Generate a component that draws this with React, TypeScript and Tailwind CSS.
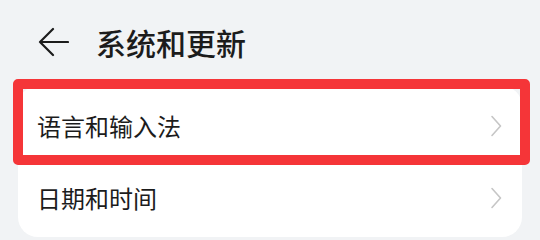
import React from 'react';

const rows = ['语言和输入法', '日期和时间'];

function Chevron() {
  return (
    <svg width="12" height="22" viewBox="0 0 12 22" fill="none">
      <path d="M2 1.5 L10.5 11 L2 20.5" stroke="#c6c6c6" strokeWidth="1.6" strokeLinecap="round" strokeLinejoin="round" />
    </svg>
  );
}

export default function App() {
  return (
    <div
      className="relative w-[540px] h-[240px] overflow-hidden bg-[#f1f3f5]"
      style={{ fontFamily: '"Noto Sans CJK SC", "Noto Sans", sans-serif' }}
    >
      {/* Header */}
      <div className="flex items-center h-[84px] pl-[38px]">
        <svg width="31" height="30" viewBox="0 0 31 30" fill="none">
          <path d="M15 2 L2 15 L15 28 M2 15 L30 15" stroke="#1c1c1c" strokeWidth="2.2" strokeLinecap="round" strokeLinejoin="round" />
        </svg>
        <h1 className="ml-[27px] text-[30px] font-medium text-[#1c1c1c] leading-none">系统和更新</h1>
      </div>

      {/* Card */}
      <div className="mx-[18px] mt-[2px] bg-white rounded-[20px] pt-[4px] pb-[3px]">
        {rows.map((r) => (
          <div key={r} className="flex items-center justify-between h-[72px] pl-[19px] pr-[20px]">
            <span className="text-[24px] text-[#1c1c1c] leading-none">{r}</span>
            <Chevron />
          </div>
        ))}
      </div>

      {/* Highlight box */}
      <div className="absolute left-[13px] top-[79px] w-[517px] h-[86px] border-[10px] border-[#f53538] rounded-[5px]" />
    </div>
  );
}
